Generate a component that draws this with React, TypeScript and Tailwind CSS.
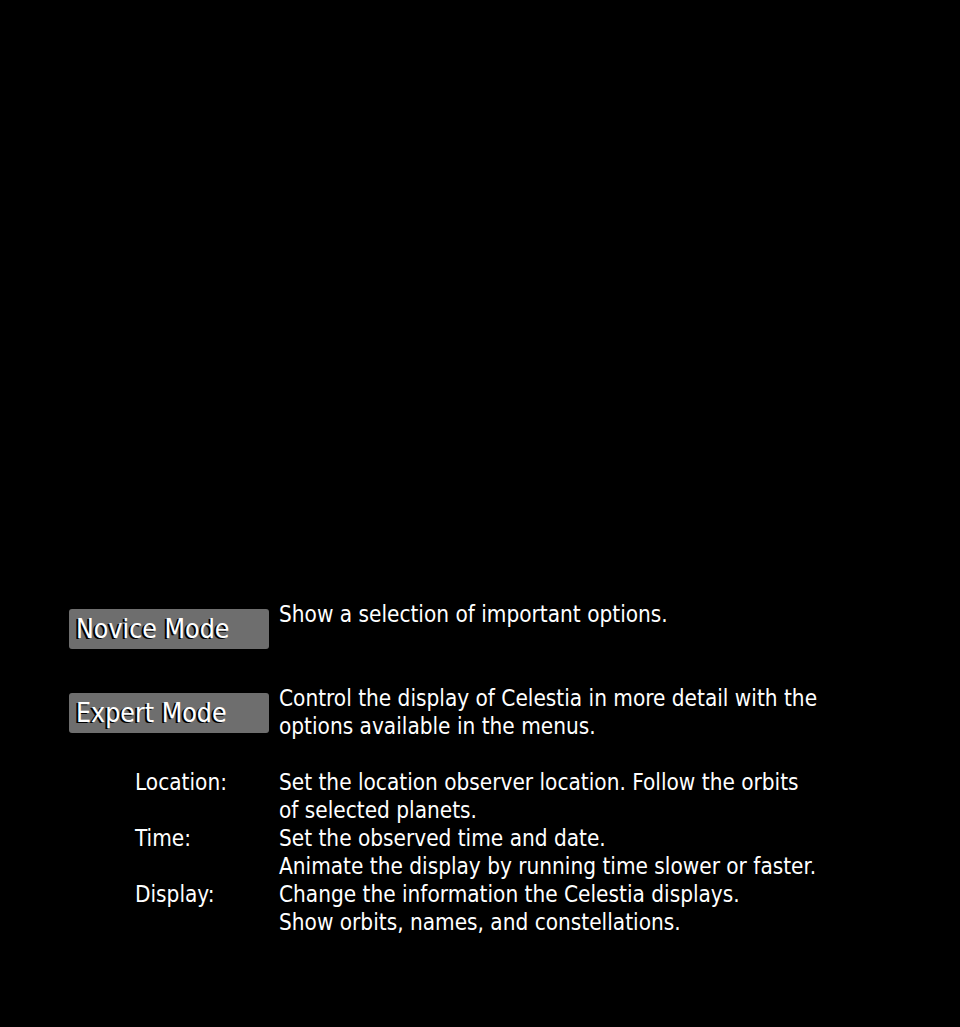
const font = {
  fontFamily: '"Liberation Sans Narrow", "DejaVu Sans Condensed", "Liberation Sans", sans-serif',
};

function ModeButton({ label }: { label: string }) {
  return (
    <div className="mt-[9px] flex h-10 w-[200px] items-center rounded-[3px] bg-[#6e6e6e] pl-[7px]">
      <span className="text-[26.5px] leading-none text-white [text-shadow:-2px_1px_0_#000]">
        {label}
      </span>
    </div>
  );
}

const details = [
  {
    label: "Location:",
    lines: ["Set the location observer location. Follow the orbits", "of selected planets."],
  },
  {
    label: "Time:",
    lines: ["Set the observed time and date.", "Animate the display by running time slower or faster."],
  },
  {
    label: "Display:",
    lines: ["Change the information the Celestia displays.", "Show orbits, names, and constellations."],
  },
];

export default function App() {
  return (
    <div className="h-[1027px] w-full bg-black pt-[600px] text-white" style={font}>
      <div className="flex h-[84px] pl-[69px]">
        <div className="w-[210px]">
          <ModeButton label="Novice Mode" />
        </div>
        <p className="text-[22.4px] leading-[28px]">Show a selection of important options.</p>
      </div>
      <div className="flex h-[84px] pl-[69px]">
        <div className="w-[210px] shrink-0">
          <ModeButton label="Expert Mode" />
        </div>
        <p className="w-[580px] text-[22.4px] leading-[28px]">
          Control the display of Celestia in more detail with the
          <br />
          options available in the menus.
        </p>
      </div>
      <div className="flex flex-col pl-[135px]">
        {details.map((d) => (
          <div key={d.label} className="flex text-[22.4px] leading-[28px]">
            <div className="w-[144px] shrink-0">{d.label}</div>
            <div>
              {d.lines.map((l) => (
                <div key={l}>{l}</div>
              ))}
            </div>
          </div>
        ))}
      </div>
    </div>
  );
}
